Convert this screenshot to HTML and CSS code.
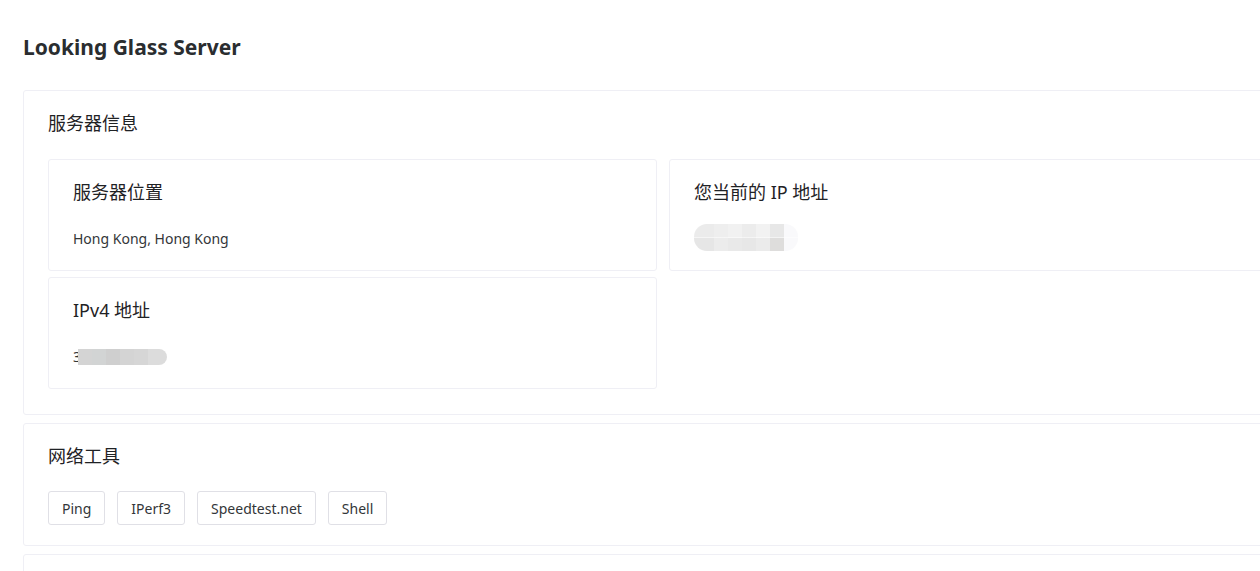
FILE: index.html
```html
<!DOCTYPE html>
<html lang="zh-CN">
<head>
    <meta charset="UTF-8">
    <meta name="viewport" content="width=device-width, initial-scale=1.0">
    <title>Looking Glass Server</title>
    <link rel="stylesheet" href="styles.css">
</head>
<body>

    <main class="page">
        <h1 class="page-title">Looking Glass Server</h1>

        <section class="card">
            <div class="card-header">服务器信息</div>
            <div class="card-content">
                <div class="info-grid">
                    <div class="info-card">
                        <div class="info-title">服务器位置</div>
                        <div class="info-value">Hong Kong, Hong Kong</div>
                    </div>
                    <div class="info-card">
                        <div class="info-title">您当前的 IP 地址</div>
                        <div class="info-value"><span class="blur blur-ip"></span></div>
                    </div>
                    <div class="info-card">
                        <div class="info-title">IPv4 地址</div>
                        <div class="info-value">3<span class="blur blur-v4"></span></div>
                    </div>
                </div>
            </div>
        </section>

        <section class="card">
            <div class="card-header">网络工具</div>
            <div class="card-content tools">
                <button class="tool-btn">Ping</button>
                <button class="tool-btn">IPerf3</button>
                <button class="tool-btn">Speedtest.net</button>
                <button class="tool-btn">Shell</button>
            </div>
        </section>

        <!-- next tool panel, starts below the fold -->
        <section class="card card-empty"></section>
    </main>

</body>
</html>
```

FILE: styles.css
```css
html, body {
    margin: 0;
    padding: 0;
    overflow: hidden;
    background-color: #fff;
}
body {
    font-family: "Noto Sans", "Noto Sans CJK SC", sans-serif;
    color: #333639;
}
.page {
    width: 1280px;
    padding: 32px 0 0 23px;
}
.page-title {
    margin: 0 0 28px;
    font-size: 21px;
    line-height: 30px;
    font-weight: 700;
    color: #2a2d30;
}
.card {
    border: 1px solid #efeff5;
    border-radius: 3px;
    background-color: #fff;
    margin-bottom: 8px;
}
.card-empty {
    height: 120px;
}
.card-header {
    padding: 19px 24px 0;
    font-size: 18px;
    line-height: 26px;
    color: #1f2225;
}
.card-content {
    padding: 23px 24px 25px;
}
.info-grid {
    display: grid;
    grid-template-columns: 1fr 1fr;
    column-gap: 12px;
    row-gap: 6px;
}
.info-card {
    border: 1px solid #efeff5;
    border-radius: 3px;
    padding: 20px 24px 20px;
}
.info-title {
    font-size: 18px;
    line-height: 25px;
    color: #1f2225;
}
.info-value {
    margin-top: 23px;
    height: 22px;
    font-size: 14px;
    line-height: 22px;
    display: flex;
    align-items: center;
}
.blur {
    display: inline-block;
    flex-shrink: 0;
}
.blur-ip {
    width: 104px;
    height: 27px;
    margin-top: -3px;
    border-radius: 13px;
    background:
        linear-gradient(to right, #ebebeb 0 20px, #eeeeee 20px 34px, #f1f1f1 34px 48px, #ececec 48px 62px, #f2f2f2 62px 76px, #e7e7e7 76px 90px, #f9f9fb 90px) top / 100% 50% no-repeat,
        linear-gradient(to right, #e6e6e6 0 20px, #ececec 20px 34px, #e9e9e9 34px 48px, #e7e7e7 48px 62px, #ebebeb 62px 76px, #dedddc 76px 90px, #f9f9fb 90px) bottom / 100% 50% no-repeat;
}
.blur-v4 {
    width: 89px;
    height: 16px;
    margin-left: -3px;
    border-radius: 0 8px 8px 0;
    background: linear-gradient(to right, #d4d4d4 0 14px, #d2d4d4 14px 28px, #cfcfcf 28px 42px, #d4d4d4 42px 56px, #d6d6d6 56px 70px, #dcdcdc 70px);
}
.tools {
    display: flex;
    gap: 12px;
    padding-top: 22px;
    padding-bottom: 20px;
}
.tool-btn {
    height: 34px;
    padding: 0 13px;
    font-family: "Noto Sans", "Noto Sans CJK SC", sans-serif;
    font-size: 14px;
    color: #333639;
    background-color: #fff;
    border: 1px solid #e0e0e6;
    border-radius: 3px;
    cursor: pointer;
}
.tool-btn:hover {
    border-color: #36ad6a;
    color: #36ad6a;
}
```
